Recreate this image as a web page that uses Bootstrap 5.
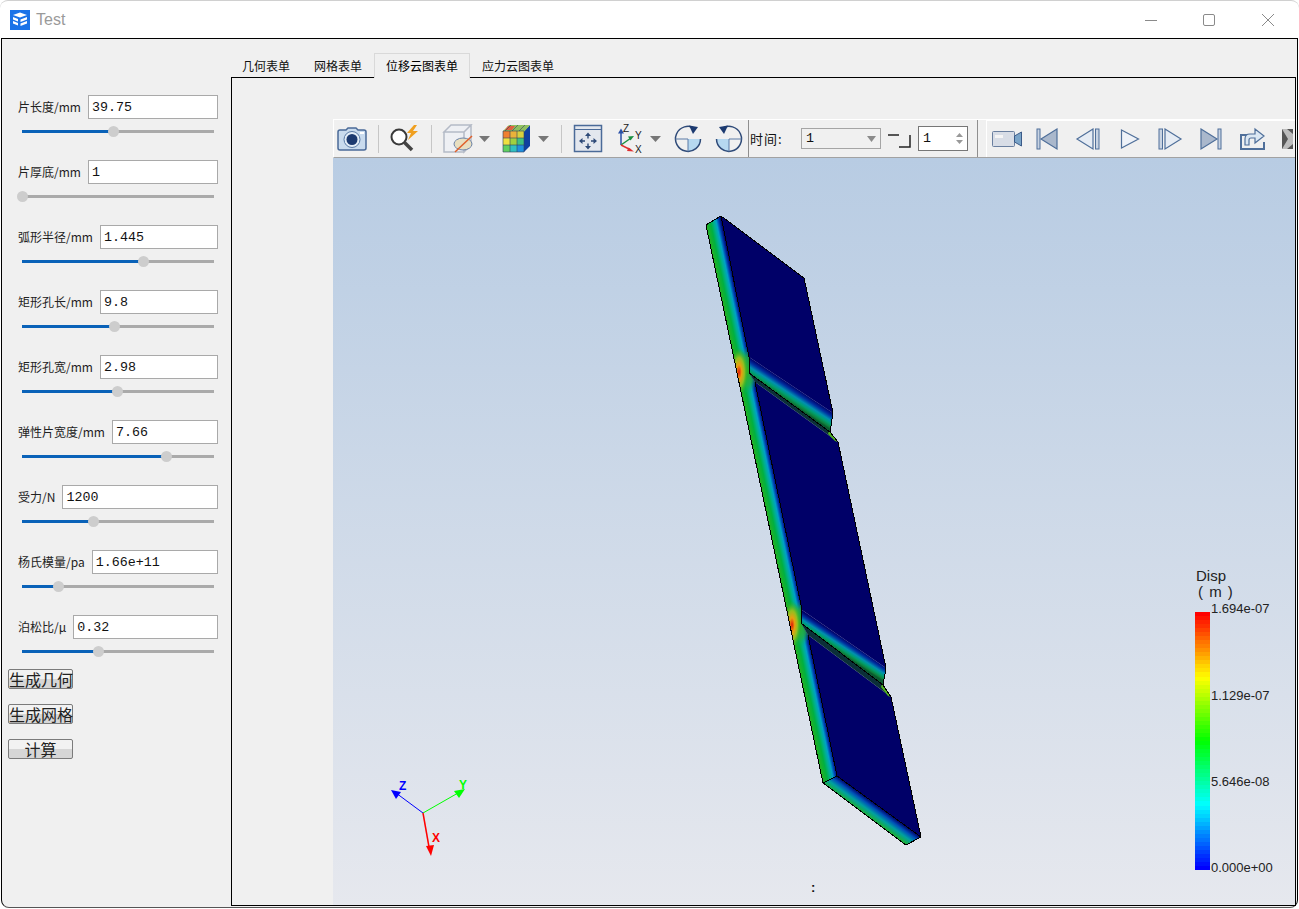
<!DOCTYPE html>
<html lang="zh-CN">
<head>
  <meta charset="UTF-8">
  <meta name="viewport" content="width=device-width, initial-scale=1.0">
  <title>Test</title>
  <link href="https://cdn.jsdelivr.net/npm/bootstrap@5.3.0/dist/css/bootstrap.min.css" rel="stylesheet">
  <style>
    html, body { margin: 0; background: #fff; overflow: hidden; }
    body { font-family: "Liberation Sans", "Noto Sans CJK SC", sans-serif; font-size: 12px; color: #111; }
    .app-win { width: 1299px; height: 908px; border-top: 1px solid #d0d0d0; border-radius: 8px 8px 0 0; }
    .title-bar { height: 37px; }
    .title-text { font-size: 16px; color: #9a9a9a; margin-left: 6px; }
    .app-logo { margin-left: 10px; }
    .win-ctrl { width: 59px; }
    .client-area { width: 1297px; height: 870px; margin-left: 1px; background: #f0f0f0; border: 1px solid #000; border-bottom-color: #555; border-radius: 0 0 8px 8px; }
    .side-panel { width: 229px; padding: 56px 0 0 6px; font-family: "Noto Sans CJK SC", sans-serif; }
    .param-list { padding-left: 10px; gap: 26px; width: 210px; }
    .param-label { margin-right: 7px; white-space: nowrap; font-size: 12px; line-height: 24px; color: #222; }
    .form-control.param-input { height: 24px; min-height: 0; padding: 0 3px; border: 1px solid #a9a9a9; border-radius: 0; background: #fff; font: 13.33px "Liberation Mono", monospace; color: #111; box-shadow: none; }
    .slide-track { position: relative; height: 3px; width: 192px; margin: 11px 0 1px 4px; background: #aaa; }
    .slide-fill { position: absolute; left: 0; top: 0; height: 3px; background: #0a62b8; }
    .slide-thumb { position: absolute; right: -5px; top: -4px; width: 11px; height: 11px; border-radius: 50%; background: #cdcdcd; }
    .btn.qt-btn { display: block; width: 65px; height: 20px; padding: 0; border: 1px solid #7b7b7b; border-radius: 2px; font: 16px/17px "Noto Sans CJK SC", sans-serif; color: #222; background: linear-gradient(#f2f2f2 0 50%, #d6d6d6 50% 100%); white-space: nowrap; }
    .btn-stack { margin-top: 15px; }
    .btn.qt-btn + .btn.qt-btn { margin-top: 15px; }
    .btn.qt-btn.last-btn { margin-top: 13px; }
    .right-part { width: 1066px; }
    .form-tabs { height: 38px; margin-left: -1px; border: 0; font-family: "Noto Sans CJK SC", sans-serif; flex-wrap: nowrap; }
    .form-tabs .nav-link { height: 24px; padding: 0 11px; margin: 0; border: 1px solid transparent; border-bottom: 0; border-radius: 0; font-size: 12px; line-height: 23px; color: #111; background: none; white-space: nowrap; }
    .form-tabs .nav-link.active { position: relative; z-index: 1; height: 25px; margin-bottom: -1px; background: #f0f0f0; border-color: #d9d9d9; }
    .form-tabs .nav-item { margin-top: 14px; }
    .view-frame { width: 1065px; height: 829px; border: 1px solid #000; padding: 41px 0 0 101px; }
    .tool-row { width: 962px; height: 39px; border-top: 1px solid #fff; border-left: 1px solid #fff; border-bottom: 1px solid #a2a2a2; overflow: hidden; }
    .tool-row svg { flex: none; }
    .tool-sep { width: 1px; height: 28px; background: #c6c6c6; flex: none; }
    .tool-sep.dark-sep { height: 37px; background: #8e8e8e; }
    .time-label { width: 52px; flex: none; padding-left: 1px; font: 13px "Noto Sans CJK SC", sans-serif; letter-spacing: 1px; }
    .combo-box { width: 80px; height: 21px; flex: none; padding: 0 4px; border: 1px solid #a5a5a5; font: 13.33px "Liberation Mono", monospace; }
    .spin-box { width: 50px; height: 25px; flex: none; padding: 0 4px; border: 1px solid #777; background: #fff; font: 13.33px "Liberation Mono", monospace; }
    .gap-after { margin: 0 7px; }
    .tool-group-two { margin-left: 9px; height: 37px; }
    .tool-group-inner { border-top: 1px solid #fff; border-left: 1px solid #fff; height: 37px; }
    .view-port { display: block; background: linear-gradient(#b8cce3, #e6e8ee); }
    .legend-text { font: 13px "Liberation Sans", sans-serif; fill: #222; }
    .legend-title { font: 15px "Liberation Sans", sans-serif; fill: #222; }
    .legend-unit { letter-spacing: 1px; }
    .axis-text { font: bold 12px "Liberation Sans", sans-serif; }
    .icon-text { font: 10px "Liberation Sans", sans-serif; fill: #222; }
  </style>
</head>
<body>
  <div class="app-win">
    <!-- title bar -->
    <div class="title-bar d-flex align-items-center">
      <svg class="app-logo" width="20" height="20" viewBox="0 0 20 20">
        <rect width="20" height="20" fill="#1a73e8"/>
        <path d="M3 5l7-2.500L17 5l-7 2.500z" fill="#fff"/>
        <path d="M3 7l5 2v2.500l-5-2zM3 11l5 2v2.500l-5-2zM10.500 9.500L17 7v2.500l-6.500 2.500zM10.500 13.500l6.500-2.500v2.500L10.500 16z" fill="#fff"/>
      </svg>
      <span class="title-text">Test</span>
      <div class="ms-auto d-flex align-items-center">
        <svg class="win-ctrl" height="14" viewBox="0 0 59 14"><path d="M23 7.500h12" stroke="#8a8a8a" fill="none"/></svg>
        <svg class="win-ctrl" height="14" viewBox="1 0 59 14"><rect x="23.500" y="1.500" width="11" height="11" rx="1.500" stroke="#8a8a8a" fill="none"/></svg>
        <svg class="win-ctrl" height="14" viewBox="1 0 59 14"><path d="M23 1l12 12M35 1L23 13" stroke="#8a8a8a" fill="none"/></svg>
      </div>
    </div>

    <div class="client-area d-flex">
      <!-- parameter panel -->
      <div class="side-panel flex-shrink-0">
        <div class="param-list d-flex flex-column">
          <div>
            <div class="d-flex"><label class="param-label">片长度/mm</label><input class="form-control param-input" value="39.75"></div>
            <div class="slide-track"><div class="slide-fill" style="width:92px"><div class="slide-thumb"></div></div></div>
          </div>
          <div>
            <div class="d-flex"><label class="param-label">片厚底/mm</label><input class="form-control param-input" value="1"></div>
            <div class="slide-track"><div class="slide-fill" style="width:1px"><div class="slide-thumb"></div></div></div>
          </div>
          <div>
            <div class="d-flex"><label class="param-label">弧形半径/mm</label><input class="form-control param-input" value="1.445"></div>
            <div class="slide-track"><div class="slide-fill" style="width:122px"><div class="slide-thumb"></div></div></div>
          </div>
          <div>
            <div class="d-flex"><label class="param-label">矩形孔长/mm</label><input class="form-control param-input" value="9.8"></div>
            <div class="slide-track"><div class="slide-fill" style="width:93px"><div class="slide-thumb"></div></div></div>
          </div>
          <div>
            <div class="d-flex"><label class="param-label">矩形孔宽/mm</label><input class="form-control param-input" value="2.98"></div>
            <div class="slide-track"><div class="slide-fill" style="width:96px"><div class="slide-thumb"></div></div></div>
          </div>
          <div>
            <div class="d-flex"><label class="param-label">弹性片宽度/mm</label><input class="form-control param-input" value="7.66"></div>
            <div class="slide-track"><div class="slide-fill" style="width:145px"><div class="slide-thumb"></div></div></div>
          </div>
          <div>
            <div class="d-flex"><label class="param-label">受力/N</label><input class="form-control param-input" value="1200"></div>
            <div class="slide-track"><div class="slide-fill" style="width:72px"><div class="slide-thumb"></div></div></div>
          </div>
          <div>
            <div class="d-flex"><label class="param-label">杨氏模量/pa</label><input class="form-control param-input" value="1.66e+11"></div>
            <div class="slide-track"><div class="slide-fill" style="width:37px"><div class="slide-thumb"></div></div></div>
          </div>
          <div>
            <div class="d-flex"><label class="param-label">泊松比/μ</label><input class="form-control param-input" value="0.32"></div>
            <div class="slide-track"><div class="slide-fill" style="width:77px"><div class="slide-thumb"></div></div></div>
          </div>
        </div>
        <div class="btn-stack">
          <button class="btn qt-btn">生成几何</button>
          <button class="btn qt-btn">生成网格</button>
          <button class="btn qt-btn last-btn">计算</button>
        </div>
      </div>

      <!-- tabs and view -->
      <div class="right-part">
        <ul class="nav nav-tabs form-tabs">
          <li class="nav-item"><a class="nav-link" href="#">几何表单</a></li>
          <li class="nav-item"><a class="nav-link" href="#">网格表单</a></li>
          <li class="nav-item"><a class="nav-link active" href="#">位移云图表单</a></li>
          <li class="nav-item"><a class="nav-link" href="#">应力云图表单</a></li>
        </ul>
        <div class="view-frame">
          <div class="tool-row d-flex align-items-center">
            <!-- camera -->
            <svg width="44" height="30" viewBox="-3 0 44 30">
              <path d="M3 6h6l2-2h8l2 2h6a2 2 0 0 1 2 2v16a2 2 0 0 1-2 2H3a2 2 0 0 1-2-2V8a2 2 0 0 1 2-2z" fill="#c9dbee" stroke="#4a6a98" stroke-width="1.500"/>
              <circle cx="15" cy="15.500" r="8" fill="#e3edf7" stroke="#5a7ba6"/>
              <circle cx="15" cy="15.500" r="5.500" fill="#1c3a70"/>
              <rect x="23" y="8" width="4" height="2" fill="#fff"/>
            </svg>
            <div class="tool-sep"></div>
            <!-- zoom to data -->
            <svg width="52" height="30" viewBox="-8 0 52 30">
              <circle cx="12" cy="13" r="7.500" fill="#fff" stroke="#3a3a3a" stroke-width="2"/>
              <path d="M17.500 18.500L25 26" stroke="#444" stroke-width="3.500" fill="none"/>
              <path d="M27 1l-7 8h4l-3 7 10-9h-5l4-6z" fill="#f0a020"/>
            </svg>
            <div class="tool-sep"></div>
            <!-- slice cube -->
            <svg width="47" height="30" viewBox="-11 0 47 30">
              <path d="M1 8h20v20H1zM1 8l7-7h20l-7 7zM21 8l7-7v20l-7 7z" fill="#eef0f4" stroke="#b4bac6" stroke-width="1.500"/>
              <ellipse cx="20" cy="20" rx="9" ry="6" fill="#e8dfc0" stroke="#6d84a8"/>
              <path d="M12 28L29 12" stroke="#e0602a" stroke-width="1.500"/>
            </svg>
            <svg width="23" height="30" viewBox="0 0 23 30"><path d="M0 12h11l-5.500 6z" fill="#777"/></svg>
            <!-- colored cube -->
            <svg width="36" height="30" viewBox="0 0 36 30">
              <path d="M22 7l6-6v21l-6 6z" fill="#1040a0"/>
              <path d="M1 7l6-6h21l-6 7z" fill="#8fc060"/>
              <path d="M3 6l3-4h7l-3 4z" fill="#e06040"/>
              <rect x="1" y="7" width="7" height="7" fill="#f08030"/><rect x="8" y="7" width="7" height="7" fill="#e9b23a"/><rect x="15" y="7" width="7" height="7" fill="#d7d03e"/>
              <rect x="1" y="14" width="7" height="7" fill="#f0e040"/><rect x="8" y="14" width="7" height="7" fill="#9fd040"/><rect x="15" y="14" width="7" height="7" fill="#40c080"/>
              <rect x="1" y="21" width="7" height="7" fill="#60d060"/><rect x="8" y="21" width="7" height="7" fill="#30c0c0"/><rect x="15" y="21" width="7" height="7" fill="#2090e0"/>
              <path d="M1 7h21v21H1zM8 7v21M15 7v21M1 14h21M1 21h21M9 1L3 7M16 1l-6 6M23 1l-6 6" fill="none" stroke="#304060" stroke-width=".6"/>
            </svg>
            <svg width="23" height="30" viewBox="0 0 23 30"><path d="M0 12h11l-5.500 6z" fill="#777"/></svg>
            <div class="tool-sep"></div>
            <!-- reset view -->
            <svg width="51" height="30" viewBox="-11 0 51 30">
              <rect x="1.500" y="1.500" width="27" height="26" fill="#e3e7ee" stroke="#4a6a98" stroke-width="1.500"/>
              <path d="M1.500 5.500h27" stroke="#4a6a98"/>
              <path d="M15 8.500l-3 3.500h2.300v2.500h1.400V12H18zM15 25.500l-3-3.500h2.300v-2.500h1.400V22H18zM6 17l3.500-3v2.300H12v1.400H9.500V20zM24 17l-3.500-3v2.300H18v1.400h2.500V20z" fill="#2e4a78"/>
            </svg>
            <!-- axes -->
            <svg width="37" height="30" viewBox="0 0 37 30">
              <path d="M8 21V8" stroke="#2a50a8" stroke-width="1.500"/><path d="M8 4.500l-3 5h6z" fill="#2a50a8"/>
              <path d="M8 21l10-7" stroke="#1a9040" stroke-width="1.500"/><path d="M21 12l-6 .5 2.500 4z" fill="#1a9040"/>
              <path d="M8 21l10 5" stroke="#e03030" stroke-width="1.500"/><path d="M21 27.500l-5.500-4-1.500 3.500z" fill="#e03030"/>
              <text class="icon-text" x="10" y="8">Z</text><text class="icon-text" x="22" y="15">Y</text><text class="icon-text" x="22" y="29">X</text>
            </svg>
            <svg width="23" height="30" viewBox="0 0 23 30"><path d="M0 12h11l-5.500 6z" fill="#777"/></svg>
            <!-- rotate right -->
            <svg width="41" height="30" viewBox="0 0 41 30">
              <path d="M15 15h12.500a12.500 12.500 0 0 1-12.500 12.500z" fill="#b6d8f0"/>
              <path d="M22 4.500A12.500 12.500 0 1 0 27.500 15" fill="none" stroke="#2e4a78" stroke-width="1.500"/>
              <path d="M2.500 15H15v12.500" fill="none" stroke="#5a7ba6"/>
              <path d="M16 1.500l9 1.500-5 7z" fill="#1c3a70"/>
            </svg>
            <!-- rotate left -->
            <svg width="34" height="30" viewBox="0 0 34 30">
              <g transform="translate(30 0) scale(-1 1)">
                <path d="M15 15h12.500a12.500 12.500 0 0 1-12.500 12.500z" fill="#b6d8f0"/>
                <path d="M22 4.500A12.500 12.500 0 1 0 27.500 15" fill="none" stroke="#2e4a78" stroke-width="1.500"/>
                <path d="M2.500 15H15v12.500" fill="none" stroke="#5a7ba6"/>
                <path d="M16 1.500l9 1.500-5 7z" fill="#1c3a70"/>
              </g>
            </svg>
            <div class="tool-sep dark-sep"></div>
            <!-- time step -->
            <span class="time-label">时间:</span>
            <div class="combo-box d-flex align-items-center justify-content-between">
              <span>1</span>
              <svg width="9" height="6"><path d="M0 0h9L4.500 6z" fill="#8a8a8a"/></svg>
            </div>
            <svg class="gap-after" width="23" height="30" viewBox="0 0 23 30">
              <path d="M0 11h11M11 23h11V11" fill="none" stroke="#222" stroke-width="1.500"/>
            </svg>
            <div class="spin-box d-flex align-items-center justify-content-between">
              <span>1</span>
              <svg width="7" height="13"><path d="M0 5l3.500-4L7 5zM0 8l3.500 4L7 8z" fill="#999"/></svg>
            </div>
            <div class="tool-group-two d-flex flex-shrink-0">
              <div class="tool-sep dark-sep me-2"></div>
              <div class="tool-group-inner d-flex align-items-center">
                <!-- record -->
                <svg width="40" height="30" viewBox="-5 0 40 30">
                  <rect x="0.500" y="7.500" width="22" height="15" rx="1" fill="#d8dde6" stroke="#6a7f9f"/>
                  <rect x="3" y="11" width="8" height="3" fill="#f5f5f5"/>
                  <path d="M22.500 12l7-4v14l-7-4z" fill="#7aa4c8" stroke="#3a5a88"/>
                </svg>
                <!-- first frame -->
                <svg width="40" height="30" viewBox="-5 0 40 30">
                  <rect x="5" y="5" width="3" height="20" fill="#c8d3e2" stroke="#4f6f9a"/>
                  <path d="M25 5L9 15l16 10z" fill="#aab8cc" stroke="#4f6f9a" stroke-width="1.200"/>
                </svg>
                <!-- previous frame -->
                <svg width="42" height="30" viewBox="-6 0 42 30">
                  <path d="M20 5L4 15l16 10z" fill="#e6ecf4" stroke="#4f6f9a" stroke-width="1.200"/>
                  <rect x="22.500" y="5" width="3.500" height="20" fill="#c8d3e2" stroke="#4f6f9a"/>
                </svg>
                <!-- play -->
                <svg width="41" height="30" viewBox="-5.500 0 41 30">
                  <path d="M7 6l17 9-17 9z" fill="#eef2f8" stroke="#4f6f9a" stroke-width="1.200"/>
                </svg>
                <!-- next frame -->
                <svg width="40" height="30" viewBox="-5 0 40 30">
                  <rect x="4" y="5" width="3.500" height="20" fill="#c8d3e2" stroke="#4f6f9a"/>
                  <path d="M10 5l16 10-16 10z" fill="#e6ecf4" stroke="#4f6f9a" stroke-width="1.200"/>
                </svg>
                <!-- last frame -->
                <svg width="42" height="30" viewBox="-6 0 42 30">
                  <path d="M5 5l16 10L5 25z" fill="#aab8cc" stroke="#4f6f9a" stroke-width="1.200"/>
                  <rect x="22" y="5" width="3" height="20" fill="#c8d3e2" stroke="#4f6f9a"/>
                </svg>
                <!-- loop -->
                <svg width="40" height="30" viewBox="-5 0 40 30">
                  <path d="M11 11H4v14h23v-7" fill="none" stroke="#4f6f9a" stroke-width="2"/>
                  <path d="M8 21v-6c0-3 2-5 5-5h5V5l9 7-9 7v-5h-4c-1.500 0-2 1-2 2v5z" fill="#dbe7f3" stroke="#4f6f9a" stroke-width="1.200"/>
                </svg>
                <!-- more -->
                <svg width="23" height="30" viewBox="0 0 23 30">
                  <rect x="10" y="5" width="11" height="20" fill="#bcbcbc"/>
                  <path d="M10 5l6 10-6 10zM15 5h6v5zM15 25h6v-5z" fill="#333" opacity=".75"/>
                </svg>
              </div>
            </div>
          </div>

          <!-- render view, coordinates are the window's own -->
          <svg class="view-port" width="962" height="747" viewBox="333 158 962 747">
            <defs>
              <linearGradient id="stripGrad" gradientUnits="userSpaceOnUse" x1="706" y1="225" x2="722.200" y2="221.600">
                <stop offset="0" stop-color="#28b020"/>
                <stop offset=".3" stop-color="#00b040"/>
                <stop offset=".5" stop-color="#00b090"/>
                <stop offset=".65" stop-color="#00a0c8"/>
                <stop offset=".8" stop-color="#0040b0"/>
                <stop offset=".93" stop-color="#000a78"/>
                <stop offset="1" stop-color="#000068"/>
              </linearGradient>
              <linearGradient id="stepGrad1" gradientUnits="userSpaceOnUse" x1="791" y1="385" x2="782.500" y2="397.900">
                <stop offset="0" stop-color="#000068"/>
                <stop offset=".25" stop-color="#0030a0"/>
                <stop offset=".5" stop-color="#0090b0"/>
                <stop offset=".7" stop-color="#00a070"/>
                <stop offset=".9" stop-color="#10803a"/>
                <stop offset="1" stop-color="#0a5a30"/>
              </linearGradient>
              <linearGradient id="stepGrad2" gradientUnits="userSpaceOnUse" x1="844" y1="639" x2="836.500" y2="650.400">
                <stop offset="0" stop-color="#000068"/>
                <stop offset=".25" stop-color="#0030a0"/>
                <stop offset=".5" stop-color="#0090b0"/>
                <stop offset=".7" stop-color="#00a070"/>
                <stop offset=".9" stop-color="#10803a"/>
                <stop offset="1" stop-color="#0a5a30"/>
              </linearGradient>
              <linearGradient id="endGrad" gradientUnits="userSpaceOnUse" x1="871" y1="800.700" x2="862.300" y2="812.600">
                <stop offset="0" stop-color="#000068"/>
                <stop offset=".3" stop-color="#0050b8"/>
                <stop offset=".6" stop-color="#00a0a0"/>
                <stop offset="1" stop-color="#20b030"/>
              </linearGradient>
              <radialGradient id="hotSpot">
                <stop offset="0" stop-color="#e01808"/>
                <stop offset=".3" stop-color="#e8a010"/>
                <stop offset=".6" stop-color="#90c020"/>
                <stop offset="1" stop-color="#30b020" stop-opacity="0"/>
              </radialGradient>
              <radialGradient id="greenSpot">
                <stop offset="0" stop-color="#30b020"/>
                <stop offset=".6" stop-color="#20b040" stop-opacity=".8"/>
                <stop offset="1" stop-color="#00b060" stop-opacity="0"/>
              </radialGradient>
              <clipPath id="stripClip">
                <polygon points="706,225 721,216 749,357 749,373 755,382 802,610 801,623 808,635 837,776 823,783"/>
              </clipPath>
            </defs>

            <!-- side strip -->
            <polygon points="706,225 721,216 749,357 749,373 755,382 802,610 801,623 808,635 837,776 823,783" fill="url(#stripGrad)"/>
            <g clip-path="url(#stripClip)">
              <ellipse cx="747" cy="371" rx="11" ry="24" fill="url(#greenSpot)"/>
              <ellipse cx="739" cy="372" rx="9" ry="24" fill="url(#hotSpot)"/>
              <ellipse cx="800" cy="624" rx="11" ry="24" fill="url(#greenSpot)"/>
              <ellipse cx="792" cy="625" rx="9" ry="24" fill="url(#hotSpot)"/>
            </g>

            <!-- top panels -->
            <polygon points="721,216 804,278 833,413 749,357" fill="#000068"/>
            <polygon points="755,382 838,442 886,668 802,610" fill="#000068"/>
            <polygon points="808,635 891,697 921,837 837,776" fill="#000068"/>

            <!-- steps -->
            <polygon points="749,357 833,413 830,432 749,373" fill="url(#stepGrad1)"/>
            <polygon points="749,373 830,432 838,442 755,382" fill="#0b3038"/>
            <polygon points="829,431 838,442 835,441 828,434" fill="#50b020"/>
            <polygon points="802,610 886,668 883,685 801,623" fill="url(#stepGrad2)"/>
            <polygon points="801,623 883,685 891,697 808,635" fill="#0b3038"/>
            <polygon points="882,684 891,697 888,696 881,687" fill="#50b020"/>

            <!-- end face -->
            <polygon points="823,783 837,776 921,837 906,845" fill="url(#endGrad)"/>

            <!-- edges -->
            <g fill="none" stroke="#000" stroke-width="1" shape-rendering="crispEdges">
              <path d="M706 225L721 216L804 278L833 413L830 432L838 442L886 668L883 685L891 697L921 837L906 845L823 783L706 225"/>
              <path d="M721 216L749 357L749 373L830 432"/>
              <path d="M755 382L802 610L801 623L883 685"/>
              <path d="M808 635L837 776L921 837M837 776L823 783"/>
            </g>

            <!-- orientation axes -->
            <path d="M423 813L396 793" stroke="#0000ff" fill="none"/>
            <path d="M423 813L458 793" stroke="#00ff00" fill="none"/>
            <path d="M423 813L429 847" stroke="#ff0000" stroke-width="1.500" fill="none"/>
            <polygon points="391,790 401,792 396,799" fill="#0000ff"/>
            <polygon points="465,789 454,791 459,798" fill="#00ff00"/>
            <polygon points="431,856 426,846 434,845" fill="#ff0000"/>
            <text class="axis-text" x="399" y="790" fill="#0000ff">Z</text>
            <text class="axis-text" x="459" y="789" fill="#00ff00">Y</text>
            <text class="axis-text" x="432" y="842" fill="#ff0000">X</text>

            <!-- scalar bar -->
            <g id="scalarBar" shape-rendering="crispEdges"></g>
            <text class="legend-title" x="1196" y="581">Disp</text>
            <text class="legend-title legend-unit" x="1198" y="597">( m )</text>
            <text class="legend-text" x="1211" y="613">1.694e-07</text>
            <text class="legend-text" x="1211" y="700">1.129e-07</text>
            <text class="legend-text" x="1211" y="786">5.646e-08</text>
            <text class="legend-text" x="1211" y="872">0.000e+00</text>
            <text x="811" y="892" font-family="Liberation Sans" font-size="13" font-weight="bold" fill="#111">:</text>
          </svg>
        </div>
      </div>
    </div>
  </div>

  <script>
    // rainbow lookup table, 64 bands from red at the top to blue at the bottom
    const bar = document.getElementById('scalarBar');
    const bands = 64;
    for (let i = 0; i < bands; i++) {
      const r = document.createElementNS('http://www.w3.org/2000/svg', 'rect');
      r.setAttribute('x', 1195);
      r.setAttribute('y', 612 + i * 258 / bands);
      r.setAttribute('width', 15);
      r.setAttribute('height', 258 / bands + (i < bands - 1 ? 1 : 0));
      r.setAttribute('fill', 'hsl(' + Math.round(240 * i / (bands - 1)) + ',100%,50%)');
      bar.appendChild(r);
    }
  </script>
  <script src="https://cdn.jsdelivr.net/npm/bootstrap@5.3.0/dist/js/bootstrap.bundle.min.js"></script>
</body>
</html>
